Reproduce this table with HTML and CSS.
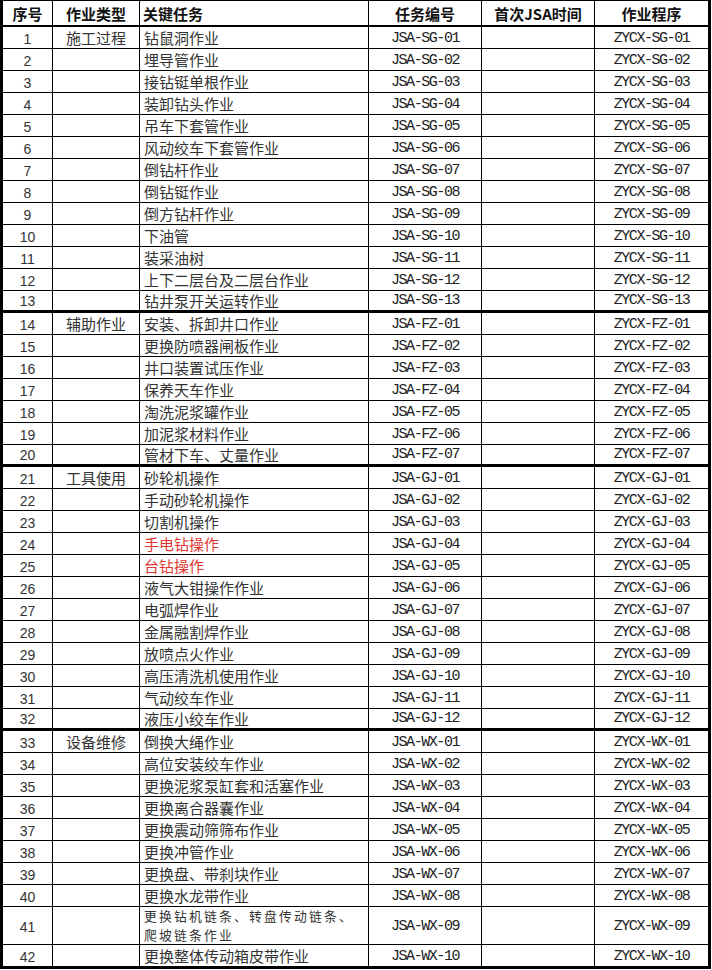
FILE: index.html
```html
<!DOCTYPE html>
<html lang="zh">
<head>
<meta charset="utf-8">
<title>JSA</title>
<link rel="stylesheet" href="styles.css">
</head>
<body>
<table class="sheet">
<colgroup>
<col class="c-no"><col class="c-type"><col class="c-task"><col class="c-code"><col class="c-time"><col class="c-proc">
</colgroup>
<thead>
<tr class="head">
<th>序号</th><th>作业类型</th><th class="left">关键任务</th><th>任务编号</th><th>首次JSA时间</th><th>作业程序</th>
</tr>
</thead>
<tbody>
<tr><td class="no">1</td><td class="type">施工过程</td><td class="task">钻鼠洞作业</td><td class="code">JSA-SG-01</td><td></td><td class="code">ZYCX-SG-01</td></tr>
<tr><td class="no">2</td><td class="type"></td><td class="task">埋导管作业</td><td class="code">JSA-SG-02</td><td></td><td class="code">ZYCX-SG-02</td></tr>
<tr><td class="no">3</td><td class="type"></td><td class="task">接钻铤单根作业</td><td class="code">JSA-SG-03</td><td></td><td class="code">ZYCX-SG-03</td></tr>
<tr><td class="no">4</td><td class="type"></td><td class="task">装卸钻头作业</td><td class="code">JSA-SG-04</td><td></td><td class="code">ZYCX-SG-04</td></tr>
<tr><td class="no">5</td><td class="type"></td><td class="task">吊车下套管作业</td><td class="code">JSA-SG-05</td><td></td><td class="code">ZYCX-SG-05</td></tr>
<tr><td class="no">6</td><td class="type"></td><td class="task">风动绞车下套管作业</td><td class="code">JSA-SG-06</td><td></td><td class="code">ZYCX-SG-06</td></tr>
<tr><td class="no">7</td><td class="type"></td><td class="task">倒钻杆作业</td><td class="code">JSA-SG-07</td><td></td><td class="code">ZYCX-SG-07</td></tr>
<tr><td class="no">8</td><td class="type"></td><td class="task">倒钻铤作业</td><td class="code">JSA-SG-08</td><td></td><td class="code">ZYCX-SG-08</td></tr>
<tr><td class="no">9</td><td class="type"></td><td class="task">倒方钻杆作业</td><td class="code">JSA-SG-09</td><td></td><td class="code">ZYCX-SG-09</td></tr>
<tr><td class="no">10</td><td class="type"></td><td class="task">下油管</td><td class="code">JSA-SG-10</td><td></td><td class="code">ZYCX-SG-10</td></tr>
<tr><td class="no">11</td><td class="type"></td><td class="task">装采油树</td><td class="code">JSA-SG-11</td><td></td><td class="code">ZYCX-SG-11</td></tr>
<tr><td class="no">12</td><td class="type"></td><td class="task">上下二层台及二层台作业</td><td class="code">JSA-SG-12</td><td></td><td class="code">ZYCX-SG-12</td></tr>
<tr class="group-end"><td class="no">13</td><td class="type"></td><td class="task">钻井泵开关运转作业</td><td class="code">JSA-SG-13</td><td></td><td class="code">ZYCX-SG-13</td></tr>
<tr><td class="no">14</td><td class="type">辅助作业</td><td class="task">安装、拆卸井口作业</td><td class="code">JSA-FZ-01</td><td></td><td class="code">ZYCX-FZ-01</td></tr>
<tr><td class="no">15</td><td class="type"></td><td class="task">更换防喷器闸板作业</td><td class="code">JSA-FZ-02</td><td></td><td class="code">ZYCX-FZ-02</td></tr>
<tr><td class="no">16</td><td class="type"></td><td class="task">井口装置试压作业</td><td class="code">JSA-FZ-03</td><td></td><td class="code">ZYCX-FZ-03</td></tr>
<tr><td class="no">17</td><td class="type"></td><td class="task">保养天车作业</td><td class="code">JSA-FZ-04</td><td></td><td class="code">ZYCX-FZ-04</td></tr>
<tr><td class="no">18</td><td class="type"></td><td class="task">淘洗泥浆罐作业</td><td class="code">JSA-FZ-05</td><td></td><td class="code">ZYCX-FZ-05</td></tr>
<tr><td class="no">19</td><td class="type"></td><td class="task">加泥浆材料作业</td><td class="code">JSA-FZ-06</td><td></td><td class="code">ZYCX-FZ-06</td></tr>
<tr class="group-end"><td class="no">20</td><td class="type"></td><td class="task">管材下车、丈量作业</td><td class="code">JSA-FZ-07</td><td></td><td class="code">ZYCX-FZ-07</td></tr>
<tr><td class="no">21</td><td class="type">工具使用</td><td class="task">砂轮机操作</td><td class="code">JSA-GJ-01</td><td></td><td class="code">ZYCX-GJ-01</td></tr>
<tr><td class="no">22</td><td class="type"></td><td class="task">手动砂轮机操作</td><td class="code">JSA-GJ-02</td><td></td><td class="code">ZYCX-GJ-02</td></tr>
<tr><td class="no">23</td><td class="type"></td><td class="task">切割机操作</td><td class="code">JSA-GJ-03</td><td></td><td class="code">ZYCX-GJ-03</td></tr>
<tr><td class="no">24</td><td class="type"></td><td class="task red">手电钻操作</td><td class="code">JSA-GJ-04</td><td></td><td class="code">ZYCX-GJ-04</td></tr>
<tr><td class="no">25</td><td class="type"></td><td class="task red">台钻操作</td><td class="code">JSA-GJ-05</td><td></td><td class="code">ZYCX-GJ-05</td></tr>
<tr><td class="no">26</td><td class="type"></td><td class="task">液气大钳操作作业</td><td class="code">JSA-GJ-06</td><td></td><td class="code">ZYCX-GJ-06</td></tr>
<tr><td class="no">27</td><td class="type"></td><td class="task">电弧焊作业</td><td class="code">JSA-GJ-07</td><td></td><td class="code">ZYCX-GJ-07</td></tr>
<tr><td class="no">28</td><td class="type"></td><td class="task">金属融割焊作业</td><td class="code">JSA-GJ-08</td><td></td><td class="code">ZYCX-GJ-08</td></tr>
<tr><td class="no">29</td><td class="type"></td><td class="task">放喷点火作业</td><td class="code">JSA-GJ-09</td><td></td><td class="code">ZYCX-GJ-09</td></tr>
<tr><td class="no">30</td><td class="type"></td><td class="task">高压清洗机使用作业</td><td class="code">JSA-GJ-10</td><td></td><td class="code">ZYCX-GJ-10</td></tr>
<tr><td class="no">31</td><td class="type"></td><td class="task">气动绞车作业</td><td class="code">JSA-GJ-11</td><td></td><td class="code">ZYCX-GJ-11</td></tr>
<tr class="group-end"><td class="no">32</td><td class="type"></td><td class="task">液压小绞车作业</td><td class="code">JSA-GJ-12</td><td></td><td class="code">ZYCX-GJ-12</td></tr>
<tr><td class="no">33</td><td class="type">设备维修</td><td class="task">倒换大绳作业</td><td class="code">JSA-WX-01</td><td></td><td class="code">ZYCX-WX-01</td></tr>
<tr><td class="no">34</td><td class="type"></td><td class="task">高位安装绞车作业</td><td class="code">JSA-WX-02</td><td></td><td class="code">ZYCX-WX-02</td></tr>
<tr><td class="no">35</td><td class="type"></td><td class="task">更换泥浆泵缸套和活塞作业</td><td class="code">JSA-WX-03</td><td></td><td class="code">ZYCX-WX-03</td></tr>
<tr><td class="no">36</td><td class="type"></td><td class="task">更换离合器囊作业</td><td class="code">JSA-WX-04</td><td></td><td class="code">ZYCX-WX-04</td></tr>
<tr><td class="no">37</td><td class="type"></td><td class="task">更换震动筛筛布作业</td><td class="code">JSA-WX-05</td><td></td><td class="code">ZYCX-WX-05</td></tr>
<tr><td class="no">38</td><td class="type"></td><td class="task">更换冲管作业</td><td class="code">JSA-WX-06</td><td></td><td class="code">ZYCX-WX-06</td></tr>
<tr><td class="no">39</td><td class="type"></td><td class="task">更换盘、带刹块作业</td><td class="code">JSA-WX-07</td><td></td><td class="code">ZYCX-WX-07</td></tr>
<tr><td class="no">40</td><td class="type"></td><td class="task">更换水龙带作业</td><td class="code">JSA-WX-08</td><td></td><td class="code">ZYCX-WX-08</td></tr>
<tr class="tall"><td class="no">41</td><td class="type"></td><td class="task wrap">更换钻机链条、转盘传动链条、<br>爬坡链条作业</td><td class="code">JSA-WX-09</td><td></td><td class="code">ZYCX-WX-09</td></tr>
<tr class="last"><td class="no">42</td><td class="type"></td><td class="task">更换整体传动箱皮带作业</td><td class="code">JSA-WX-10</td><td></td><td class="code">ZYCX-WX-10</td></tr>
</tbody>
</table>
</body>
</html>
```
FILE: styles.css
```css
html, body {
  margin: 0;
  padding: 0;
  background: #ffffff;
}

.sheet {
  border-collapse: separate;
  border-spacing: 0;
  table-layout: fixed;
  width: 711px;
  border-top: 1px solid #000;
  border-left: 3px solid #000;
  border-right: 3px solid #000;
  border-bottom: 3px solid #000;
  font-family: "Noto Sans CJK SC", "Liberation Serif", sans-serif;
  font-size: 15px;
  color: #333;
}

.c-no { width: 50px; }
.c-type { width: 87px; }
.c-task { width: 229px; }
.c-code { width: 113px; }
.c-time { width: 113px; }
.c-proc { width: 113px; }

.sheet th,
.sheet td {
  box-sizing: border-box;
  padding: 0;
  line-height: 18px;
  vertical-align: middle;
  text-align: center;
  border-right: 1px solid #000;
  border-bottom: 1px solid #000;
  height: 22px;
  white-space: nowrap;
  overflow: hidden;
}

.sheet th:last-child,
.sheet td:last-child {
  border-right: 0;
}

.head th {
  font-weight: 700;
  color: #111;
  height: 26px;
  border-bottom: 2px solid #000;
  font-size: 15px;
  padding-top: 1px;
}

.head th.left {
  text-align: left;
  padding-left: 3px;
}

.sheet td.no {
  font-family: "Liberation Sans", sans-serif;
  font-size: 14px;
  padding-top: 2px;
}

.sheet td.task {
  text-align: left;
  padding-left: 4px;
}

.sheet td.wrap {
  font-size: 12.8px;
  letter-spacing: 2.2px;
  line-height: 18.5px;
  white-space: normal;
}

.sheet td.code {
  font-family: "Liberation Mono", monospace;
  font-size: 15px;
  letter-spacing: -1.45px;
  padding-top: 3px;
  color: #222;
}

.sheet td.red {
  color: #e0352f;
}

.group-end td {
  border-bottom: 3px solid #000;
}

.sheet .group-end td.code {
  padding-top: 1px;
}

.sheet .group-end td.no {
  padding-top: 0;
}

.tall td {
  height: 38px;
}

.last td {
  border-bottom: 0;
  height: 21px;
}
```
